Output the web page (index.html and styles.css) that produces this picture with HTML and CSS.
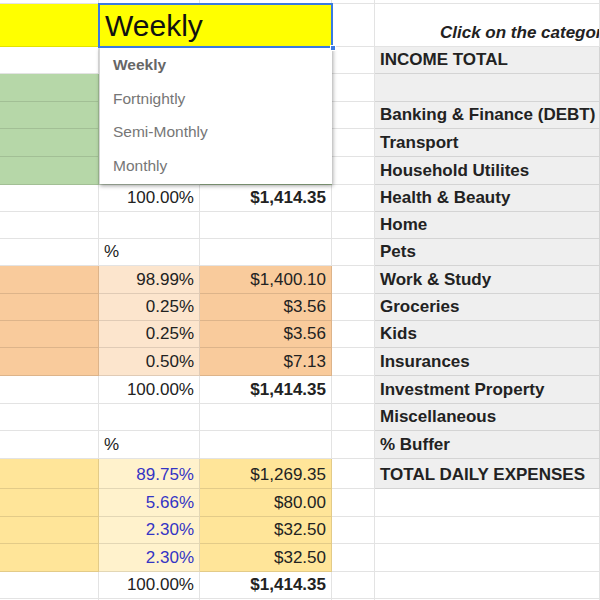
FILE: index.html
```html
<!DOCTYPE html>
<html>
<head>
<meta charset="utf-8">
<link rel="stylesheet" href="styles.css">
</head>
<body>
<div class="sheet">
  <div class="c"></div><div class="c"></div><div class="c"></div><div class="c"></div><div class="c"></div>

  <div class="c hl"></div>
  <div class="c hl merged"><span class="big">Weekly</span><span class="sel"></span><span class="handle"></span></div>
  <div class="c"></div>
  <div class="c note">Click on the category tabs below</div>

  <div class="c"></div><div class="c"></div><div class="c"></div><div class="c"></div><div class="c lbl">INCOME TOTAL</div>
  <div class="c green"></div><div class="c green-l"></div><div class="c green"></div><div class="c"></div><div class="c lbl"></div>
  <div class="c green"></div><div class="c green-l"></div><div class="c green"></div><div class="c"></div><div class="c lbl">Banking &amp; Finance (DEBT)</div>
  <div class="c green"></div><div class="c green-l"></div><div class="c green"></div><div class="c"></div><div class="c lbl">Transport</div>
  <div class="c green"></div><div class="c green-l"></div><div class="c green"></div><div class="c"></div><div class="c lbl">Household Utilites</div>

  <div class="c"></div><div class="c num">100.00%</div><div class="c num b">$1,414.35</div><div class="c"></div><div class="c lbl">Health &amp; Beauty</div>
  <div class="c"></div><div class="c"></div><div class="c"></div><div class="c"></div><div class="c lbl">Home</div>
  <div class="c"></div><div class="c">%</div><div class="c"></div><div class="c"></div><div class="c lbl">Pets</div>

  <div class="c orange"></div><div class="c orange-l num">98.99%</div><div class="c orange num">$1,400.10</div><div class="c"></div><div class="c lbl">Work &amp; Study</div>
  <div class="c orange"></div><div class="c orange-l num">0.25%</div><div class="c orange num">$3.56</div><div class="c"></div><div class="c lbl">Groceries</div>
  <div class="c orange"></div><div class="c orange-l num">0.25%</div><div class="c orange num">$3.56</div><div class="c"></div><div class="c lbl">Kids</div>
  <div class="c orange"></div><div class="c orange-l num">0.50%</div><div class="c orange num">$7.13</div><div class="c"></div><div class="c lbl">Insurances</div>

  <div class="c"></div><div class="c num">100.00%</div><div class="c num b">$1,414.35</div><div class="c"></div><div class="c lbl">Investment Property</div>
  <div class="c"></div><div class="c"></div><div class="c"></div><div class="c"></div><div class="c lbl">Miscellaneous</div>
  <div class="c"></div><div class="c">%</div><div class="c"></div><div class="c"></div><div class="c lbl">% Buffer</div>

  <div class="c yellow"></div><div class="c yellow-l num blue">89.75%</div><div class="c yellow num">$1,269.35</div><div class="c"></div><div class="c lbl">TOTAL DAILY EXPENSES</div>
  <div class="c yellow"></div><div class="c yellow-l num blue">5.66%</div><div class="c yellow num">$80.00</div><div class="c"></div><div class="c"></div>
  <div class="c yellow"></div><div class="c yellow-l num blue">2.30%</div><div class="c yellow num">$32.50</div><div class="c"></div><div class="c"></div>
  <div class="c yellow"></div><div class="c yellow-l num blue">2.30%</div><div class="c yellow num">$32.50</div><div class="c"></div><div class="c"></div>

  <div class="c"></div><div class="c num">100.00%</div><div class="c num b">$1,414.35</div><div class="c"></div><div class="c"></div>
  <div class="c"></div><div class="c"></div><div class="c"></div><div class="c"></div><div class="c"></div>

  <div class="dropdown">
    <div class="opt active">Weekly</div>
    <div class="opt">Fortnightly</div>
    <div class="opt">Semi-Monthly</div>
    <div class="opt">Monthly</div>
  </div>
</div>
</body>
</html>
```

FILE: styles.css
```css
* { box-sizing: border-box; }
html, body { margin: 0; padding: 0; }
body {
  width: 600px;
  height: 600px;
  overflow: hidden;
  background: #fff;
  font-family: "Liberation Sans", Arial, sans-serif;
  color: #222;
}
.sheet {
  position: relative;
  display: grid;
  grid-template-columns: 99px 101px 132px 43px 225px;
  grid-template-rows: 4px 43px 27px 28px 27px 28px 28px 27px 27px 27px 28px 27px 27px 28px 28px 27px 28px 30px 28px 27px 28px 27px 20px;
  width: 600px;
}
.c {
  border-right: 1px solid rgba(0, 0, 0, 0.11);
  border-bottom: 1px solid rgba(0, 0, 0, 0.11);
  display: flex;
  align-items: flex-end;
  padding: 0 5px 3px 5px;
  font-size: 17px;
  line-height: 20px;
  white-space: nowrap;
  min-width: 0;
}
.num { justify-content: flex-end; }
.b { font-weight: bold; }
.lbl { background: #efefef; font-weight: bold; }
.hl { background: #ffff00; }
.green { background: #b6d7a8; }
.green-l { background: #d9ead3; }
.orange { background: #f9cb9c; }
.orange-l { background: #fce5cd; }
.yellow { background: #ffe599; }
.yellow-l { background: #fff2cc; }
.blue { color: #3434c4; }

.merged {
  grid-column: span 2;
  position: relative;
  padding: 0 5px 3px 6px;
}
.big {
  font-size: 30px;
  line-height: 34px;
  color: #111;
}
.sel {
  position: absolute;
  left: -1px;
  top: -1px;
  right: -2px;
  bottom: -2px;
  border: 2px solid #3b7be0;
  z-index: 3;
}
.handle {
  position: absolute;
  right: -5px;
  bottom: -5px;
  width: 6px;
  height: 6px;
  background: #3b7be0;
  border: 1px solid #fff;
  z-index: 4;
}
.note {
  font-weight: bold;
  font-style: italic;
  padding-left: 65px;
  overflow: hidden;
}
.dropdown {
  position: absolute;
  left: 99px;
  top: 47px;
  width: 233px;
  height: 137px;
  background: #fff;
  box-shadow: 1px 2px 4px rgba(0, 0, 0, 0.35);
  border-left: 1px solid #d6d6d6;
  padding: 1px 0 0 13px;
  z-index: 2;
  display: flex;
  flex-direction: column;
}
.opt {
  height: 33.7px;
  line-height: 33.7px;
  font-size: 15.5px;
  color: #767676;
}
.opt.active {
  font-weight: bold;
  color: #666;
}
```
